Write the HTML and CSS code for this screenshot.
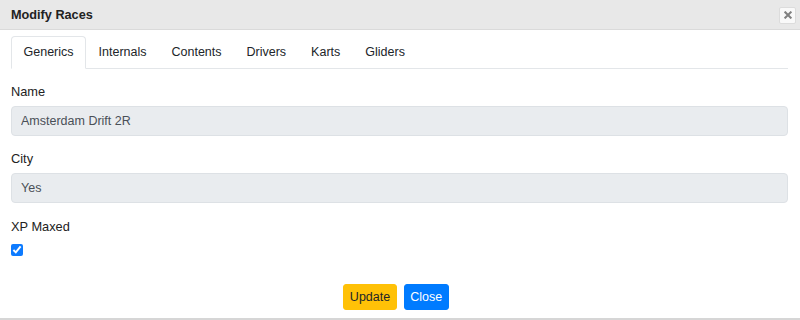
FILE: index.html
```html
<!DOCTYPE html>
<html lang="en">

<head>
    <meta charset="UTF-8">
    <meta name="viewport" content="width=device-width, initial-scale=1.0">
    <title>Modify Races</title>
    <link rel="stylesheet" href="styles.css">
</head>

<body>
    <div class="modal">
        <div class="modal-header">
            <p class="modal-title">Modify Races</p>
            <button class="close-btn" title="Close">
                <svg width="8" height="8" viewBox="0 0 8 8">
                    <path d="M1.3 1.3 L6.7 6.7 M6.7 1.3 L1.3 6.7" stroke="#808080" stroke-width="2" stroke-linecap="square" />
                </svg>
            </button>
        </div>

        <div class="modal-body">
            <ul class="tabs">
                <li class="tab active">Generics</li>
                <li class="tab">Internals</li>
                <li class="tab">Contents</li>
                <li class="tab">Drivers</li>
                <li class="tab">Karts</li>
                <li class="tab">Gliders</li>
            </ul>

            <div class="form-group group-name">
                <label for="name">Name</label>
                <input type="text" id="name" class="field" value="Amsterdam Drift 2R" readonly>
            </div>

            <div class="form-group group-city">
                <label for="city">City</label>
                <input type="text" id="city" class="field" value="Yes" readonly>
            </div>

            <div class="form-group group-xp">
                <label for="xp">XP Maxed</label>
                <input type="checkbox" id="xp" class="check" checked>
            </div>
        </div>

        <div class="modal-footer">
            <button class="button button-update">Update</button>
            <button class="button button-close">Close</button>
        </div>
    </div>
</body>

</html>
```

FILE: styles.css
```css
body {
    font-family: "Liberation Sans", Arial, sans-serif;
    font-size: 12.5px;
    color: #212529;
    background-color: #fff;
    margin: 0;
}

.modal {
    width: 800px;
}

.modal-header {
    display: flex;
    justify-content: space-between;
    align-items: center;
    height: 29px;
    padding: 0 4px 0 11px;
    background-color: #e8e8e8;
    border-bottom: 1px solid #dadada;
}

.modal-title {
    margin: 0;
    font-weight: bold;
    font-size: 12.7px;
    color: #222;
}

.close-btn {
    width: 17px;
    height: 17px;
    padding: 0;
    margin-top: 1px;
    display: flex;
    justify-content: center;
    align-items: center;
    background-color: #f9f9f9;
    border: 1px solid #dcdcdc;
    border-radius: 2px;
}

.modal-body {
    padding: 6px 12px 0 11px;
}

.tabs {
    display: flex;
    list-style: none;
    margin: 0;
    padding: 0;
    border-bottom: 1px solid #e3e6e9;
}

.tab {
    padding: 7px 11.5px 8px;
    font-size: 12.5px;
    line-height: 16px;
    color: #212529;
    border: 1px solid transparent;
    border-radius: 4px 4px 0 0;
    margin-bottom: -1px;
}

.tab.active {
    background-color: #fff;
    border-color: #e3e6e9 #e3e6e9 #fff;
}

.form-group label {
    display: block;
    font-size: 12.8px;
    line-height: 17px;
    margin-bottom: 6px;
    color: #222;
}

.group-name {
    margin-top: 14px;
}

.group-city {
    margin-top: 14px;
}

.group-xp {
    margin-top: 15px;
}

.field {
    display: block;
    width: 100%;
    height: 30px;
    box-sizing: border-box;
    padding: 0 9px;
    font-family: inherit;
    font-size: 12.5px;
    color: #495057;
    background-color: #e9ecef;
    border: 1px solid #dde1e5;
    border-radius: 4px;
    outline: none;
}

.check {
    display: block;
    width: 12px;
    height: 12px;
    margin: 9px 0 0;
    accent-color: #0d7bff;
}

.modal-footer {
    display: flex;
    justify-content: center;
    gap: 7px;
    padding: 28px 8px 8px 0;
    border-bottom: 2px solid #d6d6d6;
}

.button {
    height: 26px;
    padding: 0 5.5px;
    font-family: inherit;
    font-size: 12.5px;
    border: 1px solid transparent;
    border-radius: 3px;
    cursor: pointer;
}

.button-update {
    background-color: #ffc107;
    border-color: #ffc107;
    color: #212529;
}

.button-close {
    background-color: #007bff;
    border-color: #007bff;
    color: #fff;
}
```
